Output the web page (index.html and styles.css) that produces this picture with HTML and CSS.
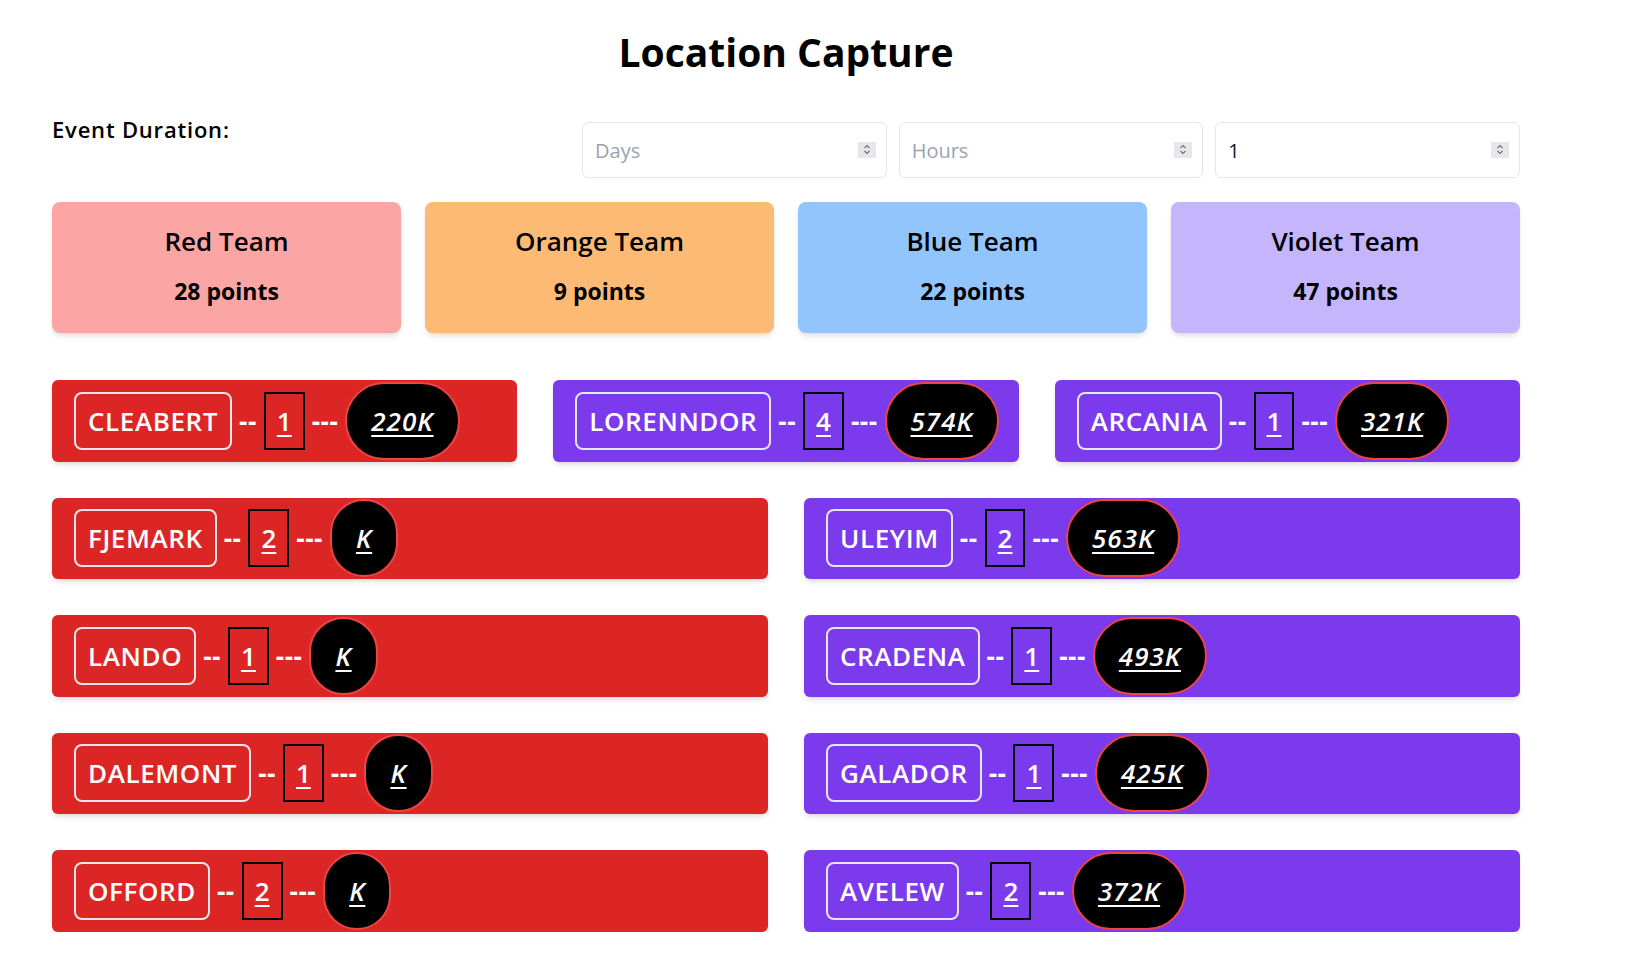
FILE: index.html
```html
<!DOCTYPE html>
<html lang="en">
<head>
<meta charset="utf-8">
<title>Location Capture</title>
<link rel="stylesheet" href="styles.css">
</head>
<body>
<main class="page">
  <h1 class="title">Location Capture</h1>

  <section class="duration">
    <label class="duration-label">Event Duration:</label>
    <div class="duration-inputs">
      <div class="field">
        <input class="num-input" type="number" placeholder="Days">
        <span class="spin"><svg viewBox="0 0 18 15" width="18" height="15"><path d="M6.5 6 L9 3.5 L11.5 6" /><path d="M6.5 9 L9 11.5 L11.5 9" /></svg></span>
      </div>
      <div class="field">
        <input class="num-input" type="number" placeholder="Hours">
        <span class="spin"><svg viewBox="0 0 18 15" width="18" height="15"><path d="M6.5 6 L9 3.5 L11.5 6" /><path d="M6.5 9 L9 11.5 L11.5 9" /></svg></span>
      </div>
      <div class="field">
        <input class="num-input" type="number" value="1">
        <span class="spin"><svg viewBox="0 0 18 15" width="18" height="15"><path d="M6.5 6 L9 3.5 L11.5 6" /><path d="M6.5 9 L9 11.5 L11.5 9" /></svg></span>
      </div>
    </div>
  </section>

  <section class="teams">
    <div class="team team-red"><div class="team-name">Red Team</div><div class="team-points">28 points</div></div>
    <div class="team team-orange"><div class="team-name">Orange Team</div><div class="team-points">9 points</div></div>
    <div class="team team-blue"><div class="team-name">Blue Team</div><div class="team-points">22 points</div></div>
    <div class="team team-violet"><div class="team-name">Violet Team</div><div class="team-points">47 points</div></div>
  </section>

  <section class="locations">
    <div class="loc loc-red span-2"><span class="loc-name">CLEABERT</span><span class="dash">--</span><span class="loc-num"><u>1</u></span><span class="dash">---</span><span class="loc-power"><u>220K</u></span></div>
    <div class="loc loc-violet span-2"><span class="loc-name">LORENNDOR</span><span class="dash">--</span><span class="loc-num"><u>4</u></span><span class="dash">---</span><span class="loc-power"><u>574K</u></span></div>
    <div class="loc loc-violet span-2"><span class="loc-name">ARCANIA</span><span class="dash">--</span><span class="loc-num"><u>1</u></span><span class="dash">---</span><span class="loc-power"><u>321K</u></span></div>

    <div class="loc loc-red span-3"><span class="loc-name">FJEMARK</span><span class="dash">--</span><span class="loc-num"><u>2</u></span><span class="dash">---</span><span class="loc-power"><u>K</u></span></div>
    <div class="loc loc-violet span-3"><span class="loc-name">ULEYIM</span><span class="dash">--</span><span class="loc-num"><u>2</u></span><span class="dash">---</span><span class="loc-power"><u>563K</u></span></div>

    <div class="loc loc-red span-3"><span class="loc-name">LANDO</span><span class="dash">--</span><span class="loc-num"><u>1</u></span><span class="dash">---</span><span class="loc-power"><u>K</u></span></div>
    <div class="loc loc-violet span-3"><span class="loc-name">CRADENA</span><span class="dash">--</span><span class="loc-num"><u>1</u></span><span class="dash">---</span><span class="loc-power"><u>493K</u></span></div>

    <div class="loc loc-red span-3"><span class="loc-name">DALEMONT</span><span class="dash">--</span><span class="loc-num"><u>1</u></span><span class="dash">---</span><span class="loc-power"><u>K</u></span></div>
    <div class="loc loc-violet span-3"><span class="loc-name">GALADOR</span><span class="dash">--</span><span class="loc-num"><u>1</u></span><span class="dash">---</span><span class="loc-power"><u>425K</u></span></div>

    <div class="loc loc-red span-3"><span class="loc-name">OFFORD</span><span class="dash">--</span><span class="loc-num"><u>2</u></span><span class="dash">---</span><span class="loc-power"><u>K</u></span></div>
    <div class="loc loc-violet span-3"><span class="loc-name">AVELEW</span><span class="dash">--</span><span class="loc-num"><u>2</u></span><span class="dash">---</span><span class="loc-power"><u>372K</u></span></div>
  </section>
</main>
</body>
</html>
```

FILE: styles.css
```css
* { box-sizing: border-box; }

html, body {
  margin: 0;
  padding: 0;
  background: #ffffff;
}

body {
  font-family: "Open Sans", "Noto Sans", sans-serif;
  color: #000;
}

.page {
  width: 1468px;
  margin-left: 52px;
  padding-top: 30px;
}

.title {
  margin: 0;
  text-align: center;
  font-size: 39px;
  line-height: 44px;
  font-weight: 700;
}

.duration {
  display: flex;
  align-items: flex-start;
  margin-top: 48px;
}

.duration-label {
  flex: 1;
  font-size: 22px;
  line-height: 28px;
  font-weight: 600;
  letter-spacing: 0.8px;
  margin-top: -7px;
}

.duration-inputs {
  width: 938px;
  display: grid;
  grid-template-columns: repeat(3, 1fr);
  gap: 12px;
}

.field {
  position: relative;
}

.num-input {
  display: block;
  width: 100%;
  height: 56px;
  border: 1px solid #e5e7eb;
  border-radius: 6px;
  padding: 0 12px;
  font-family: "Open Sans", "Noto Sans", sans-serif;
  font-size: 20px;
  color: #111827;
  background: #fff;
  outline: none;
  -moz-appearance: textfield;
}

.num-input::-webkit-inner-spin-button,
.num-input::-webkit-outer-spin-button {
  -webkit-appearance: none;
  margin: 0;
}

.num-input::placeholder {
  color: #9ca3af;
}

.spin {
  position: absolute;
  right: 11px;
  top: 20px;
  width: 18px;
  height: 16px;
  background: #e6e6eb;
  display: block;
}

.spin svg {
  display: block;
  fill: none;
  stroke: #6e6e78;
  stroke-width: 1.1;
}

.teams {
  display: grid;
  grid-template-columns: repeat(4, 1fr);
  gap: 24px;
  margin-top: 24px;
}

.team {
  height: 131px;
  border-radius: 8px;
  box-shadow: 0 4px 6px -1px rgba(0,0,0,0.1), 0 2px 4px -2px rgba(0,0,0,0.1);
  text-align: center;
  padding-top: 23px;
}

.team-red { background: #fca5a5; }
.team-orange { background: #fdba74; }
.team-blue { background: #93c5fd; }
.team-violet { background: #c4b5fd; }

.team-name {
  font-size: 26px;
  line-height: 32px;
  font-weight: 600;
}

.team-points {
  margin-top: 20px;
  font-size: 23px;
  line-height: 28px;
  font-weight: 700;
}

.locations {
  display: grid;
  grid-template-columns: repeat(6, 1fr);
  gap: 36px;
  margin-top: 47px;
}

.span-2 { grid-column: span 2; }
.span-3 { grid-column: span 3; }

.loc {
  height: 81.5px;
  display: flex;
  align-items: center;
  gap: 7px;
  padding: 0 22px;
  border-radius: 6px;
  box-shadow: 0 4px 6px -1px rgba(0,0,0,0.1), 0 2px 4px -2px rgba(0,0,0,0.1);
  color: #fff;
  font-family: "Open Sans", "Noto Sans", sans-serif;
  font-size: 26px;
  font-weight: 600;
  white-space: nowrap;
}

.loc > * { flex-shrink: 0; }

.loc-red { background: #dc2626; }
.loc-violet { background: #7c3aed; }

.loc-name {
  display: inline-flex;
  align-items: center;
  height: 58px;
  padding: 0 12px;
  border: 2px solid #e5e7eb;
  border-radius: 8px;
  line-height: 1;
  letter-spacing: 0.6px;
}

.dash {
  font-weight: 700;
  line-height: 1;
  letter-spacing: 0.5px;
}

.loc-num {
  display: inline-flex;
  align-items: center;
  justify-content: center;
  height: 58px;
  padding: 0 11px;
  border: 2px solid #000;
  line-height: 1;
}

.loc-num u, .loc-power u {
  text-decoration-thickness: 2px;
  text-underline-offset: 4px;
}

.loc-power {
  display: inline-flex;
  align-items: center;
  justify-content: center;
  height: 78px;
  padding: 0 24px;
  background: #000;
  border: 2px solid #ef4444;
  border-radius: 9999px;
  font-style: italic;
  font-weight: 600;
  line-height: 1;
  letter-spacing: 1px;
}
```
